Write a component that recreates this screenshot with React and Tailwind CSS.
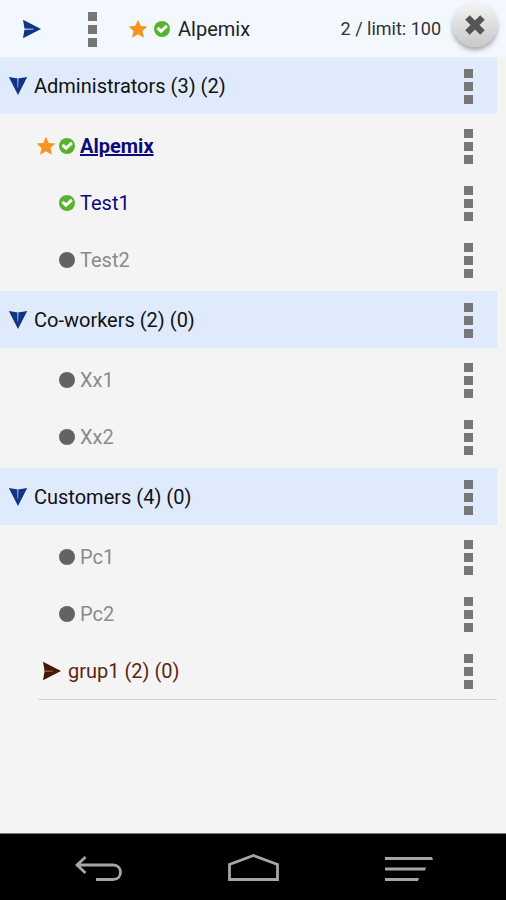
// Contact list screen: account bar, collapsible groups with members, and the system navigation bar
const groups = [
  {
    name: "Administrators (3) (2)",
    members: [
      { name: "Alpemix", status: "online", starred: true },
      { name: "Test1", status: "online" },
      { name: "Test2", status: "offline" },
    ],
  },
  {
    name: "Co-workers (2) (0)",
    members: [
      { name: "Xx1", status: "offline" },
      { name: "Xx2", status: "offline" },
    ],
  },
  {
    name: "Customers (4) (0)",
    members: [
      { name: "Pc1", status: "offline" },
      { name: "Pc2", status: "offline" },
    ],
    subgroup: "grup1 (2) (0)",
  },
];

function Arrow({ className, split }) {
  return (
    <svg viewBox="0 0 18 20" className={`h-5 w-[18px] shrink-0 ${className}`} aria-hidden="true">
      <path d="M0 0.8L18 10L0 19.2L1.6 10Z" fill="currentColor" />
      <path d="M1 9.4L10.5 9.8L10.5 10.6L1 11Z" fill={split} />
    </svg>
  );
}

function Star() {
  return (
    <svg viewBox="0 0 20 20" className="h-5 w-5 shrink-0" fill="#f7941d" aria-hidden="true">
      <path d="M10 0.8L12.8 7L19.3 7.6L14.5 12L16 18.8L10 15.3L4 18.8L5.5 12L0.7 7.6L7.2 7Z" />
    </svg>
  );
}

function Status({ online }) {
  if (!online) return <span className="size-4 shrink-0 rounded-full bg-[#636363]" />;
  return (
    <svg viewBox="0 0 16 16" className="size-4 shrink-0" aria-hidden="true">
      <circle cx="8" cy="8" r="8" fill="#56b42c" />
      <path d="M3.5 6.8L7 10.2L12.9 4.9" fill="none" stroke="#fff" strokeWidth="3" />
    </svg>
  );
}

function MoreButton({ label }) {
  return (
    <button type="button" aria-label={label} className="flex shrink-0 flex-col gap-1 px-6 pt-2.5 pb-2">
      <span className="size-[9px] bg-[#777]" />
      <span className="size-[9px] bg-[#777]" />
      <span className="size-[9px] bg-[#777]" />
    </button>
  );
}

function Member({ member }) {
  const online = member.status === "online";
  return (
    <li className="flex h-[57px] items-center justify-between">
      <a
        href="#"
        className={`flex items-center gap-[5px] ${online ? "text-[#0b0b7c]" : "text-[#8a8a8a]"} ${member.starred ? "font-bold" : ""}`}
      >
        <span className="flex w-[75px] items-center justify-end gap-[3px]">
          {member.starred && <Star />}
          <Status online={online} />
        </span>
        <span className={member.starred ? "underline" : ""}>{member.name}</span>
      </a>
      <MoreButton label={`${member.name} options`} />
    </li>
  );
}

function Group({ group }) {
  return (
    <section>
      <div className="flex h-[57px] items-center justify-between bg-[#dfeafc]">
        <button type="button" className="flex items-center gap-[7px] pl-[9px] text-[#111]">
          <Arrow className="rotate-90 text-[#0f3584]" split="#8fa9d8" />
          {group.name}
        </button>
        <MoreButton label={`${group.name} options`} />
      </div>
      <ul className="py-[3px]">
        {group.members.map((member) => (
          <Member key={member.name} member={member} />
        ))}
        {group.subgroup && (
          <li className="ml-[38px] h-[58px] border-b border-[#d4d4d4]">
            <div className="flex h-[57px] items-center justify-between">
              <button type="button" className="flex items-center gap-[7px] pl-[5px] text-[#5c2510]">
                <Arrow className="text-[#481607]" split="#8c6a5c" />
                {group.subgroup}
              </button>
              <MoreButton label={`${group.subgroup} options`} />
            </div>
          </li>
        )}
      </ul>
    </section>
  );
}

export default function App() {
  return (
    <div className="flex min-h-screen flex-col bg-[#f4f4f4] font-[Roboto,sans-serif] text-[20px] leading-6">
      <header className="flex h-[57px] items-center bg-[#f2f8fe] pr-[9px]">
        <button type="button" aria-label="Send" className="pl-[23px]">
          <Arrow className="text-[#0f3584]" split="#c3d2ee" />
        </button>
        <div className="ml-[23px]">
          <MoreButton label="Account options" />
        </div>
        <div className="ml-[7px] flex items-center gap-[6px] text-[#222]">
          <Star />
          <Status online />
          <span className="ml-[2px]">Alpemix</span>
        </div>
        <span className="ml-auto text-[18px] text-[#333]">2 / limit: 100</span>
        <button
          type="button"
          aria-label="Close"
          className="mb-2 ml-3 flex size-11 items-center justify-center rounded-full bg-linear-to-b from-[#f4f4f4] to-[#c8c8c8] shadow-[0_3px_5px_rgba(0,0,0,0.35)]"
        >
          <svg viewBox="0 0 20 20" className="size-5" aria-hidden="true">
            <path d="M2.5 2.5L17.5 17.5M17.5 2.5L2.5 17.5" stroke="#555" strokeWidth="6.4" />
          </svg>
        </button>
      </header>
      <main className="flex-1 pr-[9px]">
        {groups.map((group) => (
          <Group key={group.name} group={group} />
        ))}
      </main>
      <nav className="flex h-[67px] items-center justify-around border-t border-[#777] bg-black px-[22px] pt-1">
        <button type="button" aria-label="Back">
          <svg viewBox="0 0 52 32" className="h-8 w-[52px]" fill="none" stroke="#a6a6a6" strokeWidth="2.8">
            <path d="M12.5 4L4 12L12.5 20M4 12H40C50 12 50 26.5 40 26.5H23" />
          </svg>
        </button>
        <button type="button" aria-label="Home">
          <svg viewBox="0 0 52 32" className="h-8 w-[52px]" fill="none" stroke="#a6a6a6" strokeWidth="2.8">
            <path d="M2.5 26.5V11.5L26.5 2.5L50.5 11.5V26.5Z" />
          </svg>
        </button>
        <button type="button" aria-label="Menu">
          <svg viewBox="0 0 52 32" className="h-8 w-[52px]" fill="#a6a6a6">
            <path d="M4 4H51L52 7H4ZM4 14.5H45L44 17.5H4ZM4 25H38L37 28H4Z" />
          </svg>
        </button>
      </nav>
    </div>
  );
}
